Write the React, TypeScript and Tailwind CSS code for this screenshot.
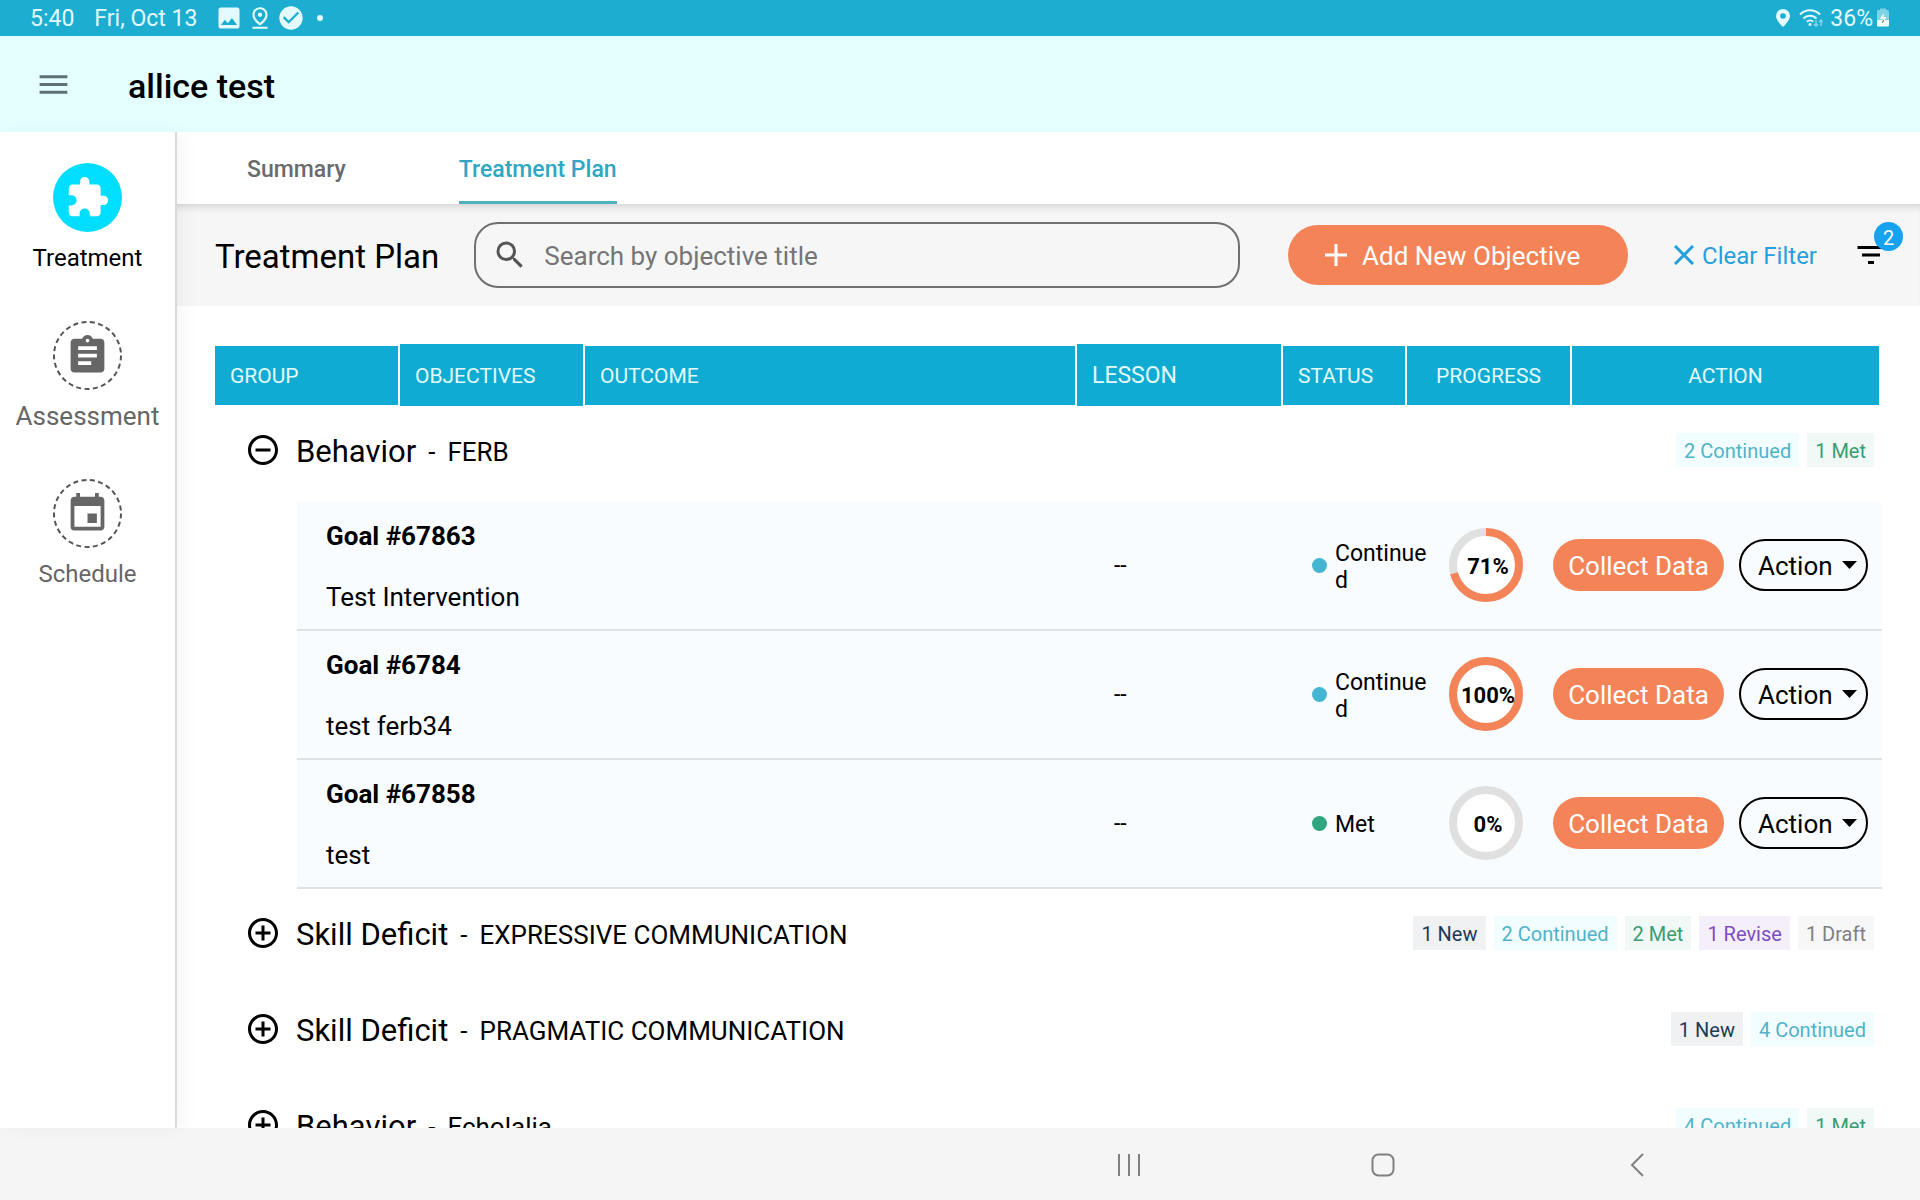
import { useState } from "react";
import type { ReactNode } from "react";
import {
  MdAddCircleOutline,
  MdAssignment,
  MdCheckCircle,
  MdEvent,
  MdExtension,
  MdFilterList,
  MdImage,
  MdMenu,
  MdOutlinePinDrop,
  MdRemoveCircleOutline,
  MdSearch,
} from "react-icons/md";

type Status = "New" | "Continued" | "Met" | "Revise" | "Draft";

interface Goal {
  id: number;
  title: string;
  status: Status;
  progress: number;
}

interface Group {
  category: string;
  name: string;
  counts: [number, Status][];
  goals: Goal[];
}

const badgeStyles: Record<Status, string> = {
  New: "bg-[#eff1f3] text-[#1e3a56]",
  Continued: "bg-[#f2fdff] text-[#4fb3c8]",
  Met: "bg-[#f0f9f6] text-[#3a9c74]",
  Revise: "bg-[#f5effc] text-[#7a4fc0]",
  Draft: "bg-[#f7f7f7] text-[#808080]",
};

const dotStyles: Record<Status, string> = {
  New: "bg-[#1e3a56]",
  Continued: "bg-[#45b6d2]",
  Met: "bg-[#2fa67e]",
  Revise: "bg-[#7a4fc0]",
  Draft: "bg-[#808080]",
};

const groups: Group[] = [
  {
    category: "Behavior",
    name: "FERB",
    counts: [[2, "Continued"], [1, "Met"]],
    goals: [
      { id: 67863, title: "Test Intervention", status: "Continued", progress: 71 },
      { id: 6784, title: "test ferb34", status: "Continued", progress: 100 },
      { id: 67858, title: "test", status: "Met", progress: 0 },
    ],
  },
  {
    category: "Skill Deficit",
    name: "EXPRESSIVE COMMUNICATION",
    counts: [[1, "New"], [2, "Continued"], [2, "Met"], [1, "Revise"], [1, "Draft"]],
    goals: [],
  },
  {
    category: "Skill Deficit",
    name: "PRAGMATIC COMMUNICATION",
    counts: [[1, "New"], [4, "Continued"]],
    goals: [],
  },
  {
    category: "Behavior",
    name: "Echolalia",
    counts: [[4, "Continued"], [1, "Met"]],
    goals: [],
  },
];

function StatusBar() {
  return (
    <div className="flex h-9 shrink-0 items-center justify-between bg-[#1cadd1] px-[30px] text-[23px] leading-9 text-[#e3fbff]">
      <div className="flex items-center">
        <span className="pt-0.5">5:40</span>
        <span className="ml-5 pt-0.5">Fri, Oct 13</span>
        <div className="ml-[18px] flex items-center gap-1">
          <MdImage size={28} />
          <MdOutlinePinDrop size={26} />
          <MdCheckCircle size={28} />
          <span className="ml-2 size-[6px] rounded-full bg-[#e3fbff]" />
        </div>
      </div>
      <div className="flex items-center">
        <svg width="16" height="20" viewBox="0 0 16 20" fill="currentColor">
          <path fillRule="evenodd" d="M8 1a7 7 0 0 0-7 7c0 4.6 7 11 7 11s7-6.400 7-11a7 7 0 0 0-7-7zm0 4.200a2.800 2.800 0 1 1 0 5.600 2.800 2.800 0 0 1 0-5.600z" />
        </svg>
        <svg className="ml-2" width="24" height="20" viewBox="0 0 24 20" fill="none" stroke="currentColor" strokeWidth="2">
          <path d="M1 6.500a14 14 0 0 1 20 0M4.500 10.500a9 9 0 0 1 13 0M7.800 13.800a4.600 4.600 0 0 1 6.400 0" />
          <circle cx="11" cy="16.500" r="1.500" fill="currentColor" stroke="none" />
          <g opacity="0.5" strokeWidth="1.500">
            <path d="M17 12v6M15 16l2 2.300 2-2.300M22 18v-6M20.300 14l1.700-2 1.700 2" />
          </g>
        </svg>
        <span className="ml-[7px] pt-0.5">36%</span>
        <svg className="ml-[3px]" width="14" height="20" viewBox="0 0 14 20">
          <path d="M4 2V.500h6V2h1.500A1.500 1.500 0 0 1 13 3.500V13H1V3.500A1.500 1.500 0 0 1 2.500 2z" fill="#7fd3e6" />
          <path d="M1 12h12v5.500a1 1 0 0 1-1 1H2a1 1 0 0 1-1-1z" fill="#f4ffff" />
          <path d="M8 5l-4.500 6H7l-1 4.500L10.500 9H7.300z" fill="#ffffff" />
          <path d="M6.800 12.500L6 15.500l2.200-3z" fill="#222" />
        </svg>
      </div>
    </div>
  );
}

interface NavItemProps {
  label: string;
  icon: ReactNode;
  active?: boolean;
  labelClass: string;
}

function NavItem({ label, icon, active, labelClass }: NavItemProps) {
  return (
    <a href="#" className="flex flex-col items-center gap-3">
      {active ? (
        <span className="flex size-[69px] items-center justify-center rounded-full bg-[#00deff] text-white">{icon}</span>
      ) : (
        <span className="relative flex size-[69px] items-center justify-center text-[#666666]">
          <svg className="absolute inset-0" width="69" height="69" viewBox="0 0 69 69" fill="none" stroke="#555555" strokeWidth="2">
            <circle cx="34.500" cy="34.500" r="33.500" strokeDasharray="5 3.420" />
          </svg>
          {icon}
        </span>
      )}
      <span className={labelClass}>{label}</span>
    </a>
  );
}

function Sidebar() {
  return (
    <nav className="relative z-10 flex w-[177px] shrink-0 flex-col gap-[49px] border-r-2 border-[#dadada] bg-white pt-[31px] shadow-[6px_0_18px_rgba(0,0,0,0.04)]">
      <NavItem label="Treatment" icon={<MdExtension size={45} />} active labelClass="text-2xl leading-7 text-black" />
      <NavItem label="Assessment" icon={<MdAssignment size={45} />} labelClass="text-[26px] leading-7 text-[#666666]" />
      <NavItem label="Schedule" icon={<MdEvent size={45} />} labelClass="text-2xl leading-7 text-[#666666]" />
    </nav>
  );
}

function Toolbar() {
  return (
    <div className="flex h-[102px] shrink-0 items-center bg-[#f6f6f6] pr-[31px] pl-[38px] shadow-[inset_0_8px_8px_-6px_rgba(0,0,0,0.16)]">
      <h1 className="pt-1 text-[33px] leading-10">Treatment Plan</h1>
      <label className="ml-[35px] flex h-[66px] flex-1 items-center rounded-3xl border-2 border-[#707070] pl-4">
        <MdSearch size={36} className="text-[#555555]" />
        <input
          type="text"
          aria-label="Search by objective title"
          placeholder="Search by objective title"
          className="ml-4 flex-1 bg-transparent pt-0.5 text-[26px] leading-8 outline-none placeholder:text-[#757575]"
        />
      </label>
      <button className="ml-12 flex h-[60px] w-[340px] items-center gap-[15px] rounded-full bg-[#f48457] pl-[37px] text-[26px] leading-8 text-white">
        <svg width="22" height="22" viewBox="0 0 22 22" stroke="currentColor" strokeWidth="3">
          <path d="M11 0v22M0 11h22" />
        </svg>
        <span className="pt-0.5">Add New Objective</span>
      </button>
      <button className="ml-[46px] flex items-center gap-2 text-2xl leading-8 text-[#26a0dc]">
        <svg width="20" height="20" viewBox="0 0 20 20" stroke="currentColor" strokeWidth="3">
          <path d="M1 1l18 18M19 1L1 19" />
        </svg>
        <span className="pt-0.5">Clear Filter</span>
      </button>
      <button aria-label="Filter" className="relative ml-9 text-black">
        <MdFilterList size={36} />
        <span className="absolute -top-[15px] left-[21px] flex size-[29px] items-center justify-center rounded-full bg-[#16a2ee] pt-0.5 text-xl leading-none text-white">
          2
        </span>
      </button>
    </div>
  );
}

function ProgressRing({ value }: { value: number }) {
  return (
    <div className="relative flex size-[74px] items-center justify-center">
      <svg className="absolute inset-0 -rotate-90" width="74" height="74" viewBox="0 0 74 74" strokeWidth="8">
        <circle cx="37" cy="37" r="33" fill="#ffffff" stroke="#e0e0e0" />
        {value > 0 && (
          <circle cx="37" cy="37" r="33" fill="none" stroke="#f48457" pathLength={100} strokeDasharray={`${value} 100`} />
        )}
      </svg>
      <span className="relative pt-1 pl-1 text-[22px] leading-7 font-bold">{value}%</span>
    </div>
  );
}

function GoalRow({ goal }: { goal: Goal }) {
  return (
    <tr>
      <td className="border-b-2 border-[#dee2e4] pt-[18px] pr-4 pb-4 pl-[29px] text-[26px] leading-8">
        <div className="font-bold">Goal #{goal.id}</div>
        <div className="mt-[29px]">{goal.title}</div>
      </td>
      <td className="border-b-2 border-[#dee2e4] pt-0.5 pl-[37px] text-[23px]">--</td>
      <td className="border-b-2 border-[#dee2e4] pl-[29px] text-[23px] leading-[27px]">
        <div className="flex items-center gap-2">
          <span className={`size-[15px] shrink-0 rounded-full ${dotStyles[goal.status]}`} />
          <span className="w-24 pt-0.5 break-all">{goal.status}</span>
        </div>
      </td>
      <td className="border-b-2 border-[#dee2e4] pb-0.5 pl-4">
        <ProgressRing value={goal.progress} />
      </td>
      <td className="border-b-2 border-[#dee2e4] pr-[14px] pb-0.5 pl-4">
        <div className="flex justify-between text-[26px] leading-8">
          <button className="h-[52px] w-[171px] rounded-full bg-[#f48457] pt-0.5 text-white">Collect Data</button>
          <button className="flex h-[52px] w-[129px] items-center justify-between rounded-full border-2 border-black pr-[9px] pl-[17px]">
            <span className="pt-0.5">Action</span>
            <svg width="15" height="8" viewBox="0 0 15 8">
              <path d="M0 0h15L7.500 8z" />
            </svg>
          </button>
        </div>
      </td>
    </tr>
  );
}

function GroupRows({ group }: { group: Group }) {
  const [open, setOpen] = useState(group.goals.length > 0);

  return (
    <>
      <tr>
        <td colSpan={7} className="p-0">
          <div className="mb-2 flex h-[88px] items-center justify-between pr-2 pl-[30px]">
            <button onClick={() => setOpen(!open)} className="flex items-center text-[26px] leading-9">
              {open ? <MdRemoveCircleOutline size={36} /> : <MdAddCircleOutline size={36} />}
              <span className="ml-[15px] pt-[3px] text-[31px]">{group.category}</span>
              <span className="mx-3 pt-[3px]">-</span>
              <span className="pt-[3px]">{group.name}</span>
            </button>
            <div className="flex gap-2 text-xl leading-8">
              {group.counts.map(([count, status]) => (
                <span key={status} className={`px-2 pt-0.5 ${badgeStyles[status]}`}>
                  {count} {status}
                </span>
              ))}
            </div>
          </div>
        </td>
      </tr>
      {open && group.goals.length > 0 && (
        <tr>
          <td colSpan={7} className="p-0 pl-[82px]">
            <table className="w-full table-fixed border-separate border-spacing-0 bg-[#f8fcfe]">
              <colgroup>
                <col />
                <col className="w-[206px]" />
                <col className="w-[150px]" />
                <col className="w-[104px]" />
                <col className="w-[345px]" />
              </colgroup>
              <tbody>
                {group.goals.map((goal) => (
                  <GoalRow key={goal.id} goal={goal} />
                ))}
              </tbody>
            </table>
          </td>
        </tr>
      )}
    </>
  );
}

function ObjectivesTable() {
  const cell = "border-t-2 border-r-2 border-b border-white bg-[#10abd2] px-[15px] pt-[3px] pb-0 font-normal";
  const tall = "border-r-2 border-white bg-[#10abd2] px-[15px] pt-[3px] pb-0 font-normal";

  return (
    <table className="w-full table-fixed border-separate border-spacing-0">
      <colgroup>
        <col className="w-[185px]" />
        <col className="w-[185px]" />
        <col />
        <col className="w-[206px]" />
        <col className="w-[124px]" />
        <col className="w-[165px]" />
        <col className="w-[310px]" />
      </colgroup>
      <thead>
        <tr className="h-[62px] text-left text-[21px] text-[#e2fbff]">
          <th className={cell}>GROUP</th>
          <th className={tall}>OBJECTIVES</th>
          <th className={cell}>OUTCOME</th>
          <th className={`${tall} text-[23px]`}>LESSON</th>
          <th className={cell}>STATUS</th>
          <th className={`${cell} text-center`}>PROGRESS</th>
          <th className="border-t-2 border-r-3 border-b border-white bg-[#10abd2] pt-[3px] pb-0 text-center font-normal">
            ACTION
          </th>
        </tr>
      </thead>
      <tbody>
        {groups.map((group) => (
          <GroupRows key={group.name} group={group} />
        ))}
      </tbody>
    </table>
  );
}

function SystemNav() {
  return (
    <div className="flex h-[72px] shrink-0 items-center justify-end bg-[#f5f5f5] pt-0.5 pr-[156px] text-[#808080]">
      <button aria-label="Recent apps" className="flex w-[254px] justify-center">
        <svg width="24" height="24" viewBox="0 0 24 24" stroke="currentColor" strokeWidth="2">
          <path d="M2 1v22M12 1v22M22 1v22" />
        </svg>
      </button>
      <button aria-label="Home" className="flex w-[254px] justify-center">
        <svg width="24" height="24" viewBox="0 0 24 24" fill="none" stroke="currentColor" strokeWidth="2">
          <rect x="1.500" y="1.500" width="21" height="21" rx="6" />
        </svg>
      </button>
      <button aria-label="Back" className="flex w-[254px] justify-center">
        <svg width="14" height="24" viewBox="0 0 14 24" fill="none" stroke="currentColor" strokeWidth="2">
          <path d="M13 1L2 12l11 11" />
        </svg>
      </button>
    </div>
  );
}

export default function App() {
  return (
    <div className="flex h-screen flex-col overflow-hidden bg-white font-['Roboto',sans-serif] text-black">
      <StatusBar />
      <header className="flex h-24 shrink-0 items-center bg-[#e3ffff] pl-[35px]">
        <button aria-label="Menu" className="text-[#5f7172]">
          <MdMenu size={37} />
        </button>
        <span className="ml-14 pt-1 text-[34px] leading-10 font-medium">allice test</span>
      </header>

      <div className="flex min-h-0 flex-1">
        <Sidebar />
        <main className="flex min-w-0 flex-1 flex-col">
          <div className="flex h-[72px] shrink-0 gap-[113px] pl-[70px] text-[23px] leading-[76px] font-medium">
            <a href="#" className="text-[#6b6b6b]">Summary</a>
            <a href="#" className="border-b-3 border-[#4fb0c0] text-[#2ea7c4]">Treatment Plan</a>
          </div>
          <Toolbar />
          <div className="min-h-0 flex-1 overflow-y-auto px-[38px] pt-[38px] [scrollbar-width:none]">
            <ObjectivesTable />
          </div>
        </main>
      </div>

      <SystemNav />
    </div>
  );
}
